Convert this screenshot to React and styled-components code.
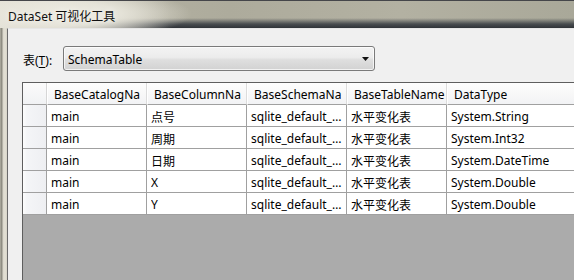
import React from 'react';
import styled, { createGlobalStyle } from 'styled-components';

const Global = createGlobalStyle`
  html, body { margin: 0; padding: 0; }
  body {
    width: 574px; height: 280px; overflow: hidden;
    font-family: "Noto Sans", "Noto Sans CJK SC", sans-serif;
    font-size: 12px; color: #000;
  }
`;

const Window = styled.div`
  width: 574px; height: 280px;
  display: flex; flex-direction: column;
  overflow: hidden;
`;

const TitleBar = styled.div`
  flex: none; height: 28px; box-sizing: border-box;
  display: flex; align-items: center;
  padding: 3px 0 0 8px;
  border-top: 1px solid #45464a;
  background:
    radial-gradient(ellipse 130px 26px at 62px 13px, rgba(236,234,224,1) 0%, rgba(232,230,220,0.9) 45%, rgba(225,222,210,0) 100%),
    linear-gradient(to right, rgba(226,223,212,1) 0px, rgba(220,217,205,0.9) 60px, rgba(210,207,195,0) 170px),
    linear-gradient(to bottom, rgba(50,54,60,0) 0px, rgba(50,54,60,0) 17px, rgba(55,60,66,0.85) 23px, rgba(40,44,50,0.95) 27px),
    linear-gradient(to right, #b9b7a7 0%, #adab9c 40%, #b3b1a2 70%, #a9a899 100%);
`;

const Title = styled.span`
  font-size: 12px;
  color: #111;
  text-shadow: 0 0 6px rgba(255,255,255,0.9);
  white-space: nowrap;
`;

const Body = styled.div`
  flex: 1; display: flex; min-height: 0;
`;

const Frame = styled.div`
  flex: none; width: 7px;
  background: linear-gradient(to right, #bdbbae 0px, #8f8d82 1px, #8f8d82 2px, #d9d6ca 3px, #e4e1d5 5px, #d6d3c7 7px);
`;

const Client = styled.div`
  flex: 1; min-width: 0;
  display: flex; flex-direction: column;
  background: #f0f0f0;
  border-left: 1px solid #6a6a6a;
  border-top: 1px solid #e6e6e6;
  padding: 17px 0 0 14px;
`;

const Toolbar = styled.div`
  display: flex; align-items: center;
  height: 25px;
  padding-left: 1px;
  gap: 8px;
`;

const Label = styled.span`
  width: 32px;
  padding-top: 2px;
  font-size: 12px;
  white-space: nowrap;
`;

const Mnemonic = styled.span`
  text-decoration: underline;
  text-underline-offset: 2px;
`;

const Combo = styled.div`
  box-sizing: border-box;
  width: 312px; height: 25px;
  display: flex; align-items: center; justify-content: space-between;
  padding: 1px 5px 0 4px;
  border: 1px solid #7a7a7a;
  border-radius: 3px;
  background: linear-gradient(to bottom, #f3f3f3 0%, #ececec 45%, #dfdfdf 55%, #d2d2d2 100%);
  box-shadow: inset 0 0 0 1px rgba(255,255,255,0.7);
`;

const ComboText = styled.span`
  font-size: 12px;
`;

const Grid = styled.div`
  flex: 1; min-height: 0;
  margin-top: 11px;
  border-left: 1px solid #5e5e5e;
  border-top: 1px solid #5e5e5e;
  background: #ababab;
  overflow: hidden;
`;

const Table = styled.div`
  display: grid;
  grid-template-columns: 24px repeat(4, 100px) 160px;
  grid-auto-rows: 22px;
  width: max-content;
`;

const Corner = styled.div`
  box-sizing: border-box;
  background: linear-gradient(to bottom, #fbfbfb, #f1f2f4);
  border-right: 1px solid #d6d6d6;
  border-bottom: 1px solid #a0a0a0;
`;

const HeaderCell = styled.div`
  box-sizing: border-box;
  background: linear-gradient(to bottom, #fdfdfd 0%, #f8f8f8 50%, #f2f3f5 100%);
  border-right: 1px solid #dcdcdc;
  border-left: 1px solid #ffffff;
  border-bottom: 1px solid #a0a0a0;
  padding: 2px 0 0 6px;
  display: flex; align-items: center;
  white-space: nowrap; overflow: hidden;
  font-size: 12px;
`;

const RowHeader = styled.div`
  box-sizing: border-box;
  background: linear-gradient(to right, #fdfdfd 0px, #f4f5f7 4px, #eeeff2 100%);
  border-right: 1px solid #a0a0a0;
  border-bottom: 1px solid #a0a0a0;
`;

const Cell = styled.div`
  box-sizing: border-box;
  background: #fff;
  border-right: 1px solid #a0a0a0;
  border-bottom: 1px solid #a0a0a0;
  padding: 2px 4px 0 4px;
  display: flex; align-items: center;
  white-space: nowrap; overflow: hidden;
  font-size: 12px;
`;

const Ellipsis = styled.span`
  overflow: hidden; text-overflow: ellipsis; white-space: nowrap; display: block; width: 100%;
`;

const columns = ['BaseCatalogNa', 'BaseColumnNa', 'BaseSchemaNa', 'BaseTableName', 'DataType'];

const rows = [
  ['main', '点号', 'sqlite_default_schema', '水平变化表', 'System.String'],
  ['main', '周期', 'sqlite_default_schema', '水平变化表', 'System.Int32'],
  ['main', '日期', 'sqlite_default_schema', '水平变化表', 'System.DateTime'],
  ['main', 'X', 'sqlite_default_schema', '水平变化表', 'System.Double'],
  ['main', 'Y', 'sqlite_default_schema', '水平变化表', 'System.Double'],
];

function DropArrow() {
  return (
    <svg width="7" height="4" viewBox="0 0 7 4">
      <path d="M0 0 H7 L3.5 4 Z" fill="#111" />
    </svg>
  );
}

export default function App() {
  return (
    <>
      <Global />
      <Window>
        <TitleBar>
          <Title>DataSet 可视化工具</Title>
        </TitleBar>
        <Body>
          <Frame />
          <Client>
            <Toolbar>
              <Label>表(<Mnemonic>T</Mnemonic>):</Label>
              <Combo>
                <ComboText>SchemaTable</ComboText>
                <DropArrow />
              </Combo>
            </Toolbar>
            <Grid>
              <Table>
                <Corner />
                {columns.map((c) => (
                  <HeaderCell key={c}>{c}</HeaderCell>
                ))}
                {rows.map((r, i) => (
                  <React.Fragment key={i}>
                    <RowHeader />
                    {r.map((v, j) => (
                      <Cell key={j}>
                        <Ellipsis>{v}</Ellipsis>
                      </Cell>
                    ))}
                  </React.Fragment>
                ))}
              </Table>
            </Grid>
          </Client>
        </Body>
      </Window>
    </>
  );
}
